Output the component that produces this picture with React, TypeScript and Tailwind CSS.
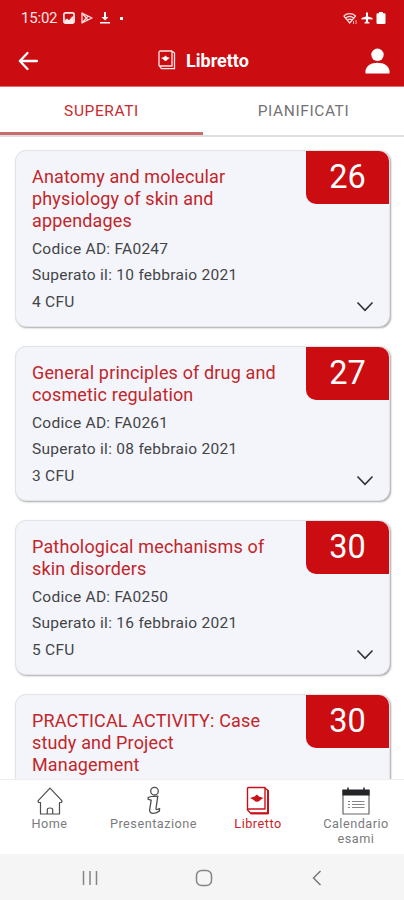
import React from "react";

type Exam = { title: string[]; grade: number; details?: { code: string; date: string; cfu: number } };

const exams: Exam[] = [
  { title: ["Anatomy and molecular", "physiology of skin and", "appendages"], grade: 26, details: { code: "FA0247", date: "10 febbraio 2021", cfu: 4 } },
  { title: ["General principles of drug and", "cosmetic regulation"], grade: 27, details: { code: "FA0261", date: "08 febbraio 2021", cfu: 3 } },
  { title: ["Pathological mechanisms of", "skin disorders"], grade: 30, details: { code: "FA0250", date: "16 febbraio 2021", cfu: 5 } },
  { title: ["PRACTICAL ACTIVITY: Case", "study and Project", "Management"], grade: 30 },
];

function StatusBar() {
  return (
    <div className="flex h-[35px] items-center pl-[21px] pr-[18px] pt-px text-white">
      <span className="w-[37px] whitespace-nowrap text-[15px] tracking-[-0.2px] opacity-90">15:02</span>
      <svg className="ml-[5px]" width="12" height="12" viewBox="0 0 12 12">
        <rect x="0.9" y="0.9" width="10.2" height="10.2" rx="1.6" fill="none" stroke="#ffecec" strokeWidth="1.7" />
        <path d="M1.5 7 4 6 6 8 8 5 10.5 4V11h-9z" fill="#ffecec" />
        <path d="M2 7.500 4.500 6 6 7.500 9 4.500" fill="none" stroke="#cb0c11" strokeWidth="1" />
      </svg>
      <svg className="ml-[6px]" width="12" height="12" viewBox="0 0 12 12" fill="none" stroke="#ffdede" strokeWidth="1.300" strokeLinejoin="round">
        <path d="M1 1 11 6 1 11zM1 1l6 7M1 11l6-7" />
      </svg>
      <svg className="ml-[7px]" width="10" height="12" viewBox="0 0 10 12" fill="#fff">
        <path d="M4 0h2v5h2.5L5 8.5 1.5 5H4zM0 10h10v1.5H0z" />
      </svg>
      <span className="ml-[10px] h-[3px] w-[3px] bg-white" />
      <svg className="ml-auto" width="15" height="13" viewBox="0 0 15 13" fill="none" stroke="#ffe0e0" strokeWidth="1.2">
        <path d="M.8 4C4 .9 9 .9 12.6 4M2.7 6c2.4-2 5.700-2 8 0M4.500 8c1.300-1 3.200-1 4.500 0" />
        <path d="M.8 4 6.700 11l5.900-7" />
        <path d="M10.500 12V9M13 8v4" strokeWidth=".8" />
      </svg>
      <svg className="ml-[3px]" width="12" height="12" viewBox="0 0 12 12" fill="#fff">
        <path d="M5 1.200a1 1 0 0 1 2 0V4.500L11.500 6v1.600L7 7.200v2.300l1.500 1v1h-5v-1l1.500-1V7.200L.5 7.600V6L5 4.500z" />
      </svg>
      <svg className="ml-[3px]" width="10" height="12" viewBox="0 0 10 12" fill="#fff">
        <rect x="3" y="0" width="4" height="2" />
        <rect x="0.500" y="1.200" width="9" height="10.800" rx="1.200" />
      </svg>
    </div>
  );
}

function Header() {
  return (
    <header className="h-[87px] shrink-0 border-b border-[#e66a6c] bg-[#cb0c11]">
      <StatusBar />
      <div className="flex h-[51px] items-center pl-[18px] pr-[14px]">
        <svg width="21" height="20" viewBox="0 0 21 20" fill="none" stroke="#fff" strokeWidth="2.300" strokeLinecap="round" strokeLinejoin="round">
          <path d="M19 10H2M9.500 2 1.800 10l7.700 8" />
        </svg>
        <svg className="ml-[119px] mb-[2px]" width="18" height="20" viewBox="0 0 18 20" fill="none" stroke="#ffe9e9" strokeWidth="1.300">
          <path d="M14 1H2.500Q1 1 1 2.500v13L3.500 18.700H16.500V3L14 1M1 15.500Q1 16 2 16H14V1" />
          <path d="M3 8 6 7 7.500 5.500 9 7l3 1-2 1q-2.500 4-5 0z" fill="#fff" stroke="none" />
        </svg>
        <h1 className="ml-[10px] text-[18px] font-bold leading-none text-white">Libretto</h1>
        <svg className="ml-auto" width="25" height="26" viewBox="0 0 25 26" fill="#fff">
          <circle cx="12.500" cy="6.800" r="6.200" />
          <path d="M.5 25.500V22.500C1.500 17.500 6.500 14.800 12.500 14.800S23.500 17.500 24.500 22.500v3z" />
        </svg>
      </div>
    </header>
  );
}

function ExamCard({ exam }: { exam: Exam }) {
  return (
    <article className="relative shrink-0 rounded-[11px] border border-[#e2e3e7] bg-[#f3f5fa] pb-[12px] pl-4 pt-[15px] shadow-[1px_1px_2px_0px_rgba(0,0,0,0.35)]">
      <h2 className="text-[18px] leading-[22px] tracking-[0.15px] text-[#c2252b]">
        {exam.title.map((line) => (
          <span key={line} className="block whitespace-nowrap">{line}</span>
        ))}
      </h2>
      {exam.details && (
        <>
          <div className="mt-[4px] text-[15.500px] leading-[26.330px] tracking-[0.27px] text-[#434448] mb-[-1px]">
            <p>Codice AD: {exam.details.code}</p>
            <p>Superato il: {exam.details.date}</p>
            <p>{exam.details.cfu} CFU</p>
          </div>
          <svg className="absolute bottom-[13px] right-[15px]" width="18" height="12" viewBox="0 0 18 12" fill="none" stroke="#303136" strokeWidth="1.600">
            <path d="M1.500 1.500 9 9.300l7.500-7.800" />
          </svg>
        </>
      )}
      <div className="absolute right-0 top-0 flex h-[53px] w-[83px] items-center justify-center rounded-bl-[10px] rounded-tr-[10px] bg-[#cb0c11] text-[32.500px] text-white">
        {exam.grade}
      </div>
    </article>
  );
}

function NavItem({ children, label, active = false }: { children: React.ReactNode; label: React.ReactNode; active?: boolean }) {
  return (
    <div className={`flex flex-col items-center ${active ? "text-[#cb2026]" : "text-[#7b7b7e]"}`}>
      <div className="flex h-[31px] items-end">{children}</div>
      <span className="mt-px text-center text-[12.700px] leading-[15px] tracking-[0.5px]">{label}</span>
    </div>
  );
}

function BottomNav() {
  return (
    <nav className="flex h-[75px] shrink-0 border-t border-[#eeeeee] bg-white pt-[4px]">
      <div className="w-[99px]">
        <NavItem label="Home">
          <svg width="26" height="28" viewBox="0 0 26 28" fill="none" stroke="#4e4e50" strokeWidth="1.200" strokeLinejoin="round">
            <path d="M3.500 15.500H1.500L1 13.800 13 1.200l12 12.600-.5 1.700h-2V27H3.500zM10.300 27v-4.500Q10.300 21 13 21t2.700 1.500V27" />
          </svg>
        </NavItem>
      </div>
      <div className="w-[109px]">
        <NavItem label="Presentazione">
          <svg width="14" height="29" viewBox="0 0 14 29" fill="none" stroke="#4e4e50" strokeWidth="1.300" strokeLinejoin="round">
            <circle cx="7.500" cy="5.200" r="3.800" />
            <path d="M1 11.800Q3 10.200 10.800 10.200L9 22.500q0 1.600 1.500.8l2.200-.7-.4 2.500Q9 27.500 5.500 27.400q-3.300-.4-2.800-4l1.500-9.200-3-.9z" />
          </svg>
        </NavItem>
      </div>
      <div className="w-[100px]">
        <NavItem label="Libretto" active>
          <svg width="24" height="29" viewBox="0 0 24 29" fill="none" stroke="#c91016" strokeWidth="1.400" strokeLinejoin="round">
            <path d="M1.500 2.500Q1.500 1.500 2.500 1.500H19V23H2.500Q1.500 23 1.500 24M19 2l3 2.500V27.500H5L1.500 24V2" />
            <path d="M22 4v23.300H4.500" strokeWidth="2" />
            <path d="M4 12 8.500 10.500 11 8.500l2 2 4.500 1.500-2.500 1.500q-4 4.500-8 0z" fill="#c91016" stroke="none" />
          </svg>
        </NavItem>
      </div>
      <div className="w-[96px]">
        <NavItem label={<>Calendario<br />esami</>}>
          <svg width="28" height="28" viewBox="0 0 28 28" fill="none" stroke="#66666a" strokeWidth="1.200">
            <path d="M1 3.500h26v23.500H1z" />
            <path d="M1 3h26v5H1z" fill="#252528" stroke="#252528" />
            <path d="M6 .5v3M22 .5v3" stroke="#252528" strokeWidth="1.500" />
            <path d="M6 14.500h2M10 14.500h12.500M6 17.500h2M10 17.500h12.500M6 20.500h2M10 20.500h12.500" stroke="#858589" />
          </svg>
        </NavItem>
      </div>
    </nav>
  );
}

function SystemNav() {
  return (
    <div className="flex h-[46px] shrink-0 items-center bg-[#f5f5f5] pl-[82px] pt-[2px]">
      <svg width="16" height="16" viewBox="0 0 16 16" stroke="#858585" strokeWidth="1.500">
        <path d="M1.500 1v14M8 1v14M14.500 1v14" />
      </svg>
      <svg className="ml-[97px]" width="18" height="18" viewBox="0 0 18 18" fill="none" stroke="#858585" strokeWidth="1.500">
        <rect x="1.500" y="1.500" width="15" height="15" rx="5" />
      </svg>
      <svg className="ml-[99px]" width="10" height="16" viewBox="0 0 10 16" fill="none" stroke="#777" strokeWidth="1.500">
        <path d="M8.500 1 1.500 8l7 7" />
      </svg>
    </div>
  );
}

export default function App() {
  return (
    <div className="flex h-[900px] w-[404px] flex-col overflow-hidden bg-white font-[Roboto,sans-serif]">
      <Header />
      <div className="flex h-[50px] shrink-0 border-b-2 border-[#dfdfdf] text-[15.500px] tracking-[0.6px]">
        <div className="flex w-[203px] items-center justify-center border-b-[3px] border-[#c96c6e] pt-[4px] text-[#c92a30]">SUPERATI</div>
        <div className="flex flex-1 items-center justify-center pt-px text-[#737376]">PIANIFICATI</div>
      </div>
      <main className="flex min-h-0 flex-1 flex-col gap-[19px] overflow-hidden pl-[15px] pr-[14px] pt-[13px]">
        {exams.map((exam) => <ExamCard key={exam.title[0]} exam={exam} />)}
      </main>
      <BottomNav />
      <SystemNav />
    </div>
  );
}
